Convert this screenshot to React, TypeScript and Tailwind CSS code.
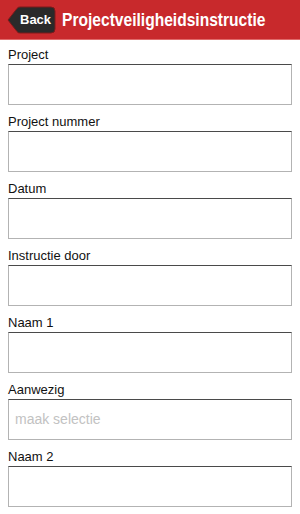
import React from "react";

const fields: { label: string; placeholder?: string }[] = [
  { label: "Project" },
  { label: "Project nummer" },
  { label: "Datum" },
  { label: "Instructie door" },
  { label: "Naam 1" },
  { label: "Aanwezig", placeholder: "maak selectie" },
  { label: "Naam 2" },
];

export default function App() {
  return (
    <div className="w-[300px] h-[514px] bg-white overflow-hidden" style={{ fontFamily: "'Liberation Sans', Arial, sans-serif" }}>
      <div className="h-[40px] bg-[#c8292c] border-b border-[#e06a6a] flex items-center relative overflow-hidden">
        <div className="ml-[7px] relative h-[28px] w-[49px] shrink-0 flex items-center">
          <svg className="absolute inset-0" width="49" height="28" viewBox="0 0 49 28">
            <path d="M1 14 L10 2.5 Q11 1 13 1 L44 1 Q48 1 48 5 L48 23 Q48 27 44 27 L13 27 Q11 27 10 25.5 Z" fill="#2a2a2a" stroke="#7a1a1a" strokeWidth="1" />
          </svg>
          <span className="relative ml-[13px] text-white font-bold text-[13px] leading-none">Back</span>
        </div>
        <div className="ml-[6px] shrink-0 text-white font-bold text-[19px] leading-none whitespace-nowrap origin-left scale-x-[0.82]">
          Projectveiligheidsinstructie
        </div>
      </div>
      <div className="px-[8px] pt-[7px]">
        {fields.map((f) => (
          <div key={f.label} className="mb-[9px]">
            <div className="h-[17px] text-[13px] leading-[16px] text-[#111]">{f.label}</div>
            <div className="h-[41px] border border-[#b3b3b3] border-t-[#4a4a4a] flex items-center px-[6px]">
              {f.placeholder && <span className="text-[14px] text-[#c2c2c2]">{f.placeholder}</span>}
            </div>
          </div>
        ))}
      </div>
    </div>
  );
}
